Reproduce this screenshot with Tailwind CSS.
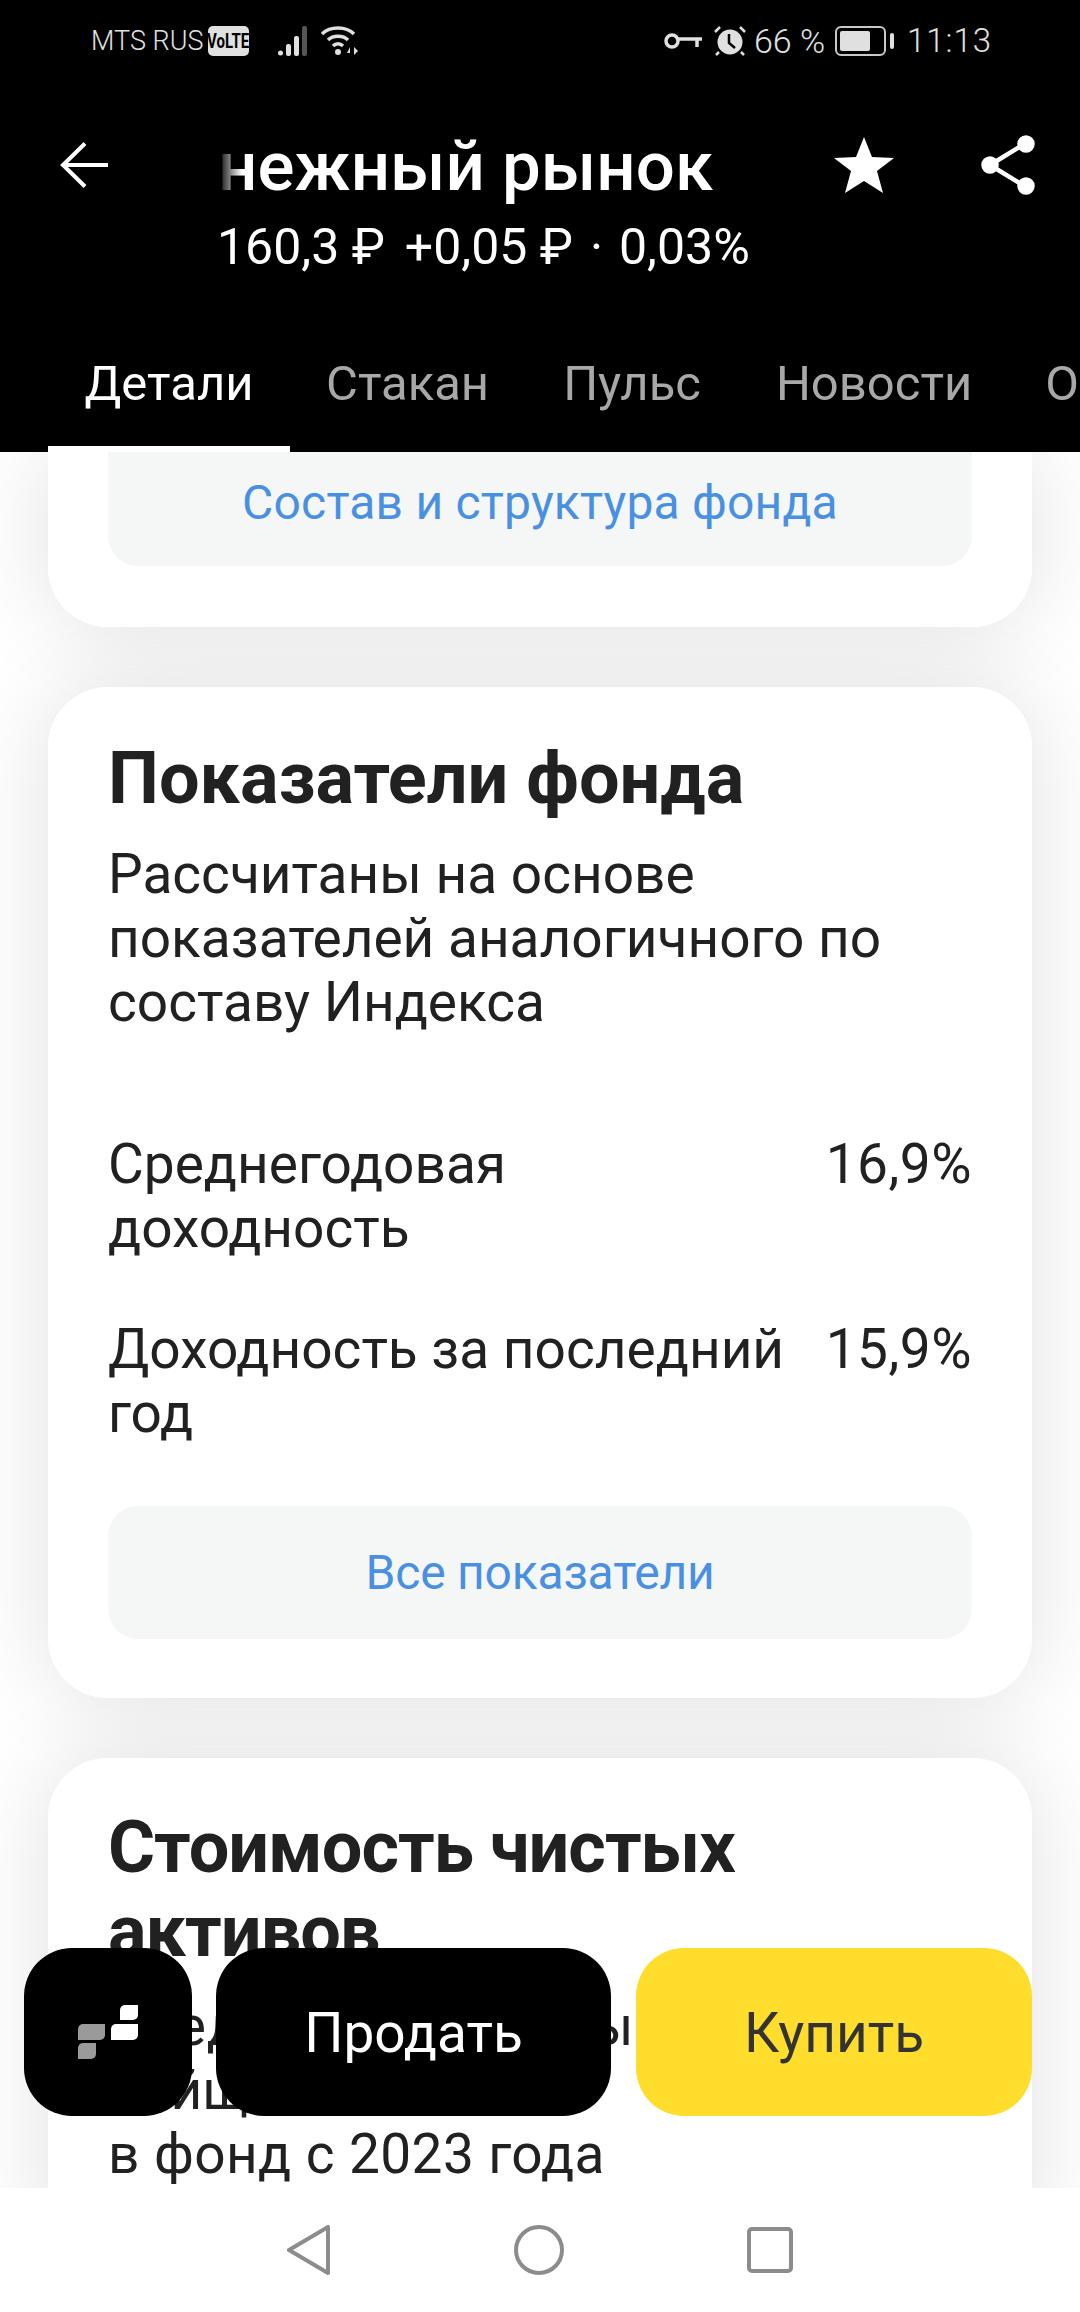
<!DOCTYPE html>
<html lang="ru">
<head>
<meta charset="UTF-8" />
<title>Денежный рынок</title>
<script src="https://cdn.jsdelivr.net/npm/@tailwindcss/browser@4"></script>
</head>
<body class="font-['Roboto',sans-serif] bg-white">
<div class="relative w-[1080px] h-[2312px] overflow-hidden flex flex-col">

	<!-- header -->
	<header class="bg-black text-white h-[452px] shrink-0 flex flex-col">
		<!-- status bar -->
		<div class="h-[82px] pl-[91px] pr-[93px] flex items-center justify-between text-[#e0e0e0] shrink-0">
			<div class="flex items-center">
				<span class="w-[111px] whitespace-nowrap text-[27px] font-light">MTS RUS</span>
				<span class="ml-[6px] w-[41px] h-[30px] rounded-[5px] bg-[#e0e0e0] text-black text-[20px] font-bold flex items-center justify-center"><span class="inline-block scale-x-75">VoLTE</span></span>
				<svg class="ml-[29px]" width="32" height="30" viewBox="0 0 32 30" fill="#e0e0e0"><circle cx="2.500" cy="27" r="2.500"/><rect x="8" y="18" width="5" height="12" rx="2"/><rect x="16" y="10" width="5" height="20" rx="2"/><rect x="24" y="0" width="5" height="30" fill="#555" rx="2"/></svg>
				<svg class="ml-[11px]" width="38" height="30" viewBox="0 0 38 30" fill="none" stroke="#e0e0e0" stroke-width="3.500"><path d="M1 8C9 0 25 0 33 8"/><path d="M7 14C12 9 22 9 27 14"/><path d="M12 20C15 17 19 17 22 20"/><circle cx="17" cy="26" r="3" fill="#e0e0e0" stroke="none"/><path d="M29 21l-3 6h3zM33 21v8l4-4z" fill="#e0e0e0" stroke="none"/></svg>
			</div>
			<div class="flex items-center">
				<svg width="38" height="16" viewBox="0 0 38 16" fill="none" stroke="#e0e0e0" stroke-width="3.500"><circle cx="8" cy="8" r="6"/><path d="M14 6H38M33 6V14"/></svg>
				<svg class="ml-[11px]" width="34" height="30" viewBox="0 0 34 30" fill="#e0e0e0"><circle cx="17" cy="16" r="12.500"/><path d="M16 8V17L22 22" stroke="#000" stroke-width="2.500" fill="none"/><path d="M2 6L7 1M32 6L27 1M6 26L3 29M28 26L31 29" stroke="#e0e0e0" stroke-width="2.500" fill="none"/></svg>
				<span class="ml-[7px] w-[74px] whitespace-nowrap text-[34px] font-light">66 %</span>
				<span class="ml-[7px] w-[51px] h-[30px] rounded-[6px] border-2 border-[#c8c8c8] p-[3px] flex"><span class="w-[30px] bg-[#e0e0e0] rounded-[2px]"></span></span>
				<span class="ml-[4px] w-[4px] h-[16px] rounded-[2px] bg-[#e0e0e0]"></span>
				<span class="ml-[13px] w-[80px] whitespace-nowrap text-[33px] font-light tracking-[1px]">11:13</span>
			</div>
		</div>

		<!-- title row -->
		<div class="relative h-[196px] shrink-0">
			<svg class="absolute left-[60px] top-[60px]" width="48" height="46" viewBox="0 0 48 46" fill="none" stroke="#fff" stroke-width="4"><path d="M3 23H48M25 1.500L3 23L25 44.500"/></svg>
			<div class="absolute left-[218px] top-[50px] whitespace-nowrap text-[69px] leading-[70px] font-medium">нежный рынок</div>
			<div class="absolute left-[218px] top-[50px] w-[24px] h-[70px] bg-gradient-to-r from-black to-transparent"></div>
			<div class="absolute left-[217px] top-[140px] flex whitespace-nowrap text-[50px] leading-[50px]">
				<span>160,3 ₽</span>
				<span class="ml-[20px]">+0,05 ₽</span>
				<span class="ml-[17px]">·</span>
				<span class="ml-[16px]">0,03%</span>
			</div>
			<svg class="absolute left-[834px] top-[55px]" width="60" height="56" viewBox="0 0 60 56" fill="#fff"><path d="M30 0L38 20L60 21L43 34L49 56L30 44L11 56L17 34L0 21L22 20Z"/></svg>
			<svg class="absolute left-[981px] top-[53px]" width="54" height="60" viewBox="0 0 54 60" fill="#fff" stroke="#fff" stroke-width="4.500"><path d="M9 30L45 8M9 30L45 52"/><circle cx="45" cy="9" r="6.500"/><circle cx="9" cy="30" r="6.500"/><circle cx="45" cy="51" r="6.500"/></svg>
		</div>

		<!-- tabs -->
		<div class="flex-1 flex text-[#a8a8a8] text-[49px] leading-[58px] whitespace-nowrap overflow-hidden">
			<div class="w-[242px] shrink-0 ml-[48px] text-center text-white border-b-[6px] border-white pt-[77px]">Детали</div>
			<div class="shrink-0 ml-[36px] pt-[77px]">Стакан</div>
			<div class="shrink-0 ml-[74px] pt-[77px]">Пульс</div>
			<div class="shrink-0 ml-[75px] pt-[77px]">Новости</div>
			<div class="shrink-0 ml-[73px] pt-[77px]">Операции</div>
		</div>
	</header>

	<!-- content -->
	<main class="isolate flex-1 bg-white px-[48px] overflow-hidden text-[#212121] text-[55px] leading-[64px]">
		<section class="relative bg-white rounded-b-[60px] px-[60px] pb-[61px]">
			<div class="absolute inset-0 -z-10 rounded-b-[60px] shadow-[0_0_96px_rgba(0,0,0,0.12)]"></div>
			<div class="h-[114px] pb-[12px] bg-[#f5f7f7] rounded-b-[30px] flex items-center justify-center text-[#4a90e2] text-[48px] tracking-[0.2px]">Состав и структура фонда</div>
		</section>

		<section class="relative bg-white rounded-[60px] mt-[60px] px-[60px] pt-[50px] pb-[59px]">
			<div class="absolute inset-0 -z-10 rounded-[60px] shadow-[0_0_96px_rgba(0,0,0,0.12)]"></div>
			<h2 class="text-[72px] leading-[84px] font-bold">Показатели фонда</h2>
			<p class="mt-[21px]">Рассчитаны на основе показателей аналогичного по составу Индекса</p>
			<div class="mt-[98px] flex justify-between gap-[40px]">
				<span>Среднегодовая доходность</span><span class="tracking-[0.5px]">16,9%</span>
			</div>
			<div class="mt-[57px] flex justify-between gap-[40px]">
				<span>Доходность за последний год</span><span class="tracking-[0.5px]">15,9%</span>
			</div>
			<div class="mt-[61px] h-[133px] bg-[#f5f7f7] rounded-[30px] flex items-center justify-center text-[#4a90e2] text-[48px] tracking-[-0.2px]">Все показатели</div>
		</section>

		<section class="relative bg-white rounded-t-[60px] mt-[60px] px-[60px] pt-[48px] pb-[60px]">
			<div class="absolute inset-0 -z-10 rounded-t-[60px] shadow-[0_0_96px_rgba(0,0,0,0.12)]"></div>
			<h2 class="text-[72px] leading-[84px] font-bold tracking-[-1px]">Стоимость чистых активов</h2>
			<p class="mt-[20px] whitespace-nowrap tracking-[0.4px]"><span class="tracking-[1px]">Средства, вложены</span><br />пайщиками<br />в фонд с 2023 года</p>
		</section>
	</main>

	<!-- bottom nav -->
	<nav class="h-[124px] shrink-0 bg-white flex items-center justify-center gap-[183px]">
		<svg width="44" height="50" viewBox="0 0 44 50" fill="none" stroke="#8c8c8c" stroke-width="4" stroke-linejoin="round"><path d="M41 2V48L2 25Z"/></svg>
		<svg width="50" height="50" viewBox="0 0 50 50" fill="none" stroke="#8c8c8c" stroke-width="4"><circle cx="25" cy="25" r="23"/></svg>
		<svg width="46" height="46" viewBox="0 0 46 46" fill="none" stroke="#8c8c8c" stroke-width="4"><rect x="2" y="2" width="42" height="42" rx="3"/></svg>
	</nav>

	<!-- floating buttons -->
	<div class="absolute left-[24px] top-[1948px] w-[1008px] h-[168px] flex text-[55px]">
		<div class="w-[168px] bg-black rounded-[48px] flex items-center justify-center">
			<svg width="60" height="54" viewBox="0 0 60 54" fill="none"><path d="M5 19H27V30a5 5 0 0 1-5 5H0V24a5 5 0 0 1 5-5Z" fill="#9a9a9a"/><path d="M5 38H18V49a5 5 0 0 1-5 5H0V43a5 5 0 0 1 5-5Z" fill="#9a9a9a"/><path d="M38 19H60V30a5 5 0 0 1-5 5H33V24a5 5 0 0 1 5-5Z" fill="#fff"/><path d="M47 0H60V10a5 5 0 0 1-5 5H42V5a5 5 0 0 1 5-5Z" fill="#fff"/></svg>
		</div>
		<div class="ml-[24px] w-[395px] pt-[3px] bg-black text-white rounded-[48px] flex items-center justify-center">Продать</div>
		<div class="ml-[25px] w-[396px] pt-[3px] bg-[#ffdd2d] text-[#333] rounded-[48px] flex items-center justify-center">Купить</div>
	</div>
</div>
</body>
</html>
